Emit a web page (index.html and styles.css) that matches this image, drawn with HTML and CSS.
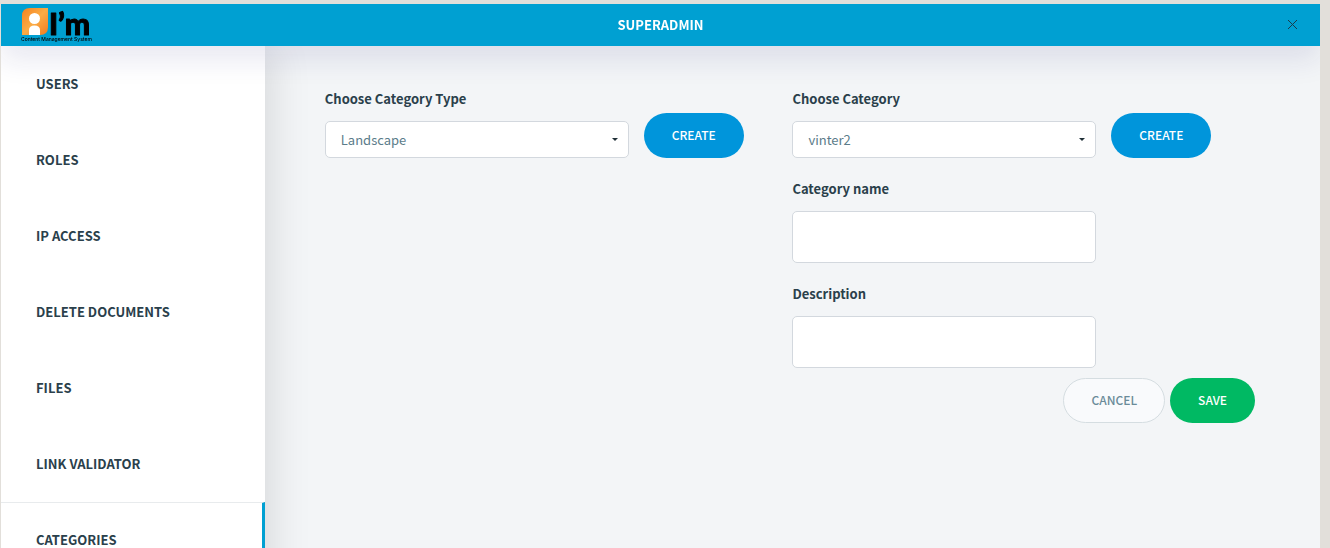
FILE: index.html
```html
<!DOCTYPE html>
<html lang="en">
<head>
<meta charset="utf-8">
<title>Superadmin</title>
<link rel="stylesheet" href="styles.css">
</head>
<body>
<div class="panel">
  <header class="header">
    <a class="logo" href="#" aria-label="I'm Content Management System">
      <svg width="80" height="40" viewBox="0 -2 80 40">
        <defs>
          <linearGradient id="badge" x1="0" y1="0" x2="1" y2="1">
            <stop offset="0" stop-color="#f58220"/>
            <stop offset="0.500" stop-color="#fbac45"/>
            <stop offset="1" stop-color="#f47b20"/>
          </linearGradient>
        </defs>
        <path d="M9 1H27V20Q27 28 19 28H1V9Q1 1 9 1Z" fill="url(#badge)"/>
        <circle cx="13.500" cy="11.500" r="5.500" fill="#fff"/>
        <path d="M8 28V23Q8 18.500 13.500 18.500Q19 18.500 19 23V28Z" fill="#fff"/>
        <text class="logo-name" x="28" y="28">I’m</text>
        <text class="logo-tagline" x="0" y="34">Content Management System</text>
      </svg>
    </a>
    <h1 class="title">SUPERADMIN</h1>
    <button class="close" type="button" aria-label="Close">
      <svg width="11" height="11" viewBox="0 0 11 11"><path d="M1 1L10 10M10 1L1 10" stroke="#1b3a49" stroke-width="1" shape-rendering="crispEdges"/></svg>
    </button>
  </header>
  <div class="body">
    <nav class="sidebar">
      <a class="tab" href="#">USERS</a>
      <a class="tab" href="#">ROLES</a>
      <a class="tab" href="#">IP ACCESS</a>
      <a class="tab" href="#">DELETE DOCUMENTS</a>
      <a class="tab" href="#">FILES</a>
      <a class="tab" href="#">LINK VALIDATOR</a>
      <a class="tab tab-active" href="#">CATEGORIES</a>
    </nav>
    <main class="content">
      <section class="column">
        <div class="row">
          <div class="field">
            <label class="label" for="type">Choose Category Type</label>
            <select class="control select" id="type"><option>Landscape</option></select>
          </div>
          <button class="button button-create" type="button">CREATE</button>
        </div>
      </section>
      <section class="column">
        <div class="row">
          <div class="field">
            <label class="label" for="category">Choose Category</label>
            <select class="control select" id="category"><option>vinter2</option></select>
          </div>
          <button class="button button-create" type="button">CREATE</button>
        </div>
        <div class="field">
          <label class="label" for="name">Category name</label>
          <input class="control input" id="name" type="text">
        </div>
        <div class="field">
          <label class="label" for="description">Description</label>
          <input class="control input" id="description" type="text">
        </div>
        <div class="actions">
          <button class="button button-cancel" type="button">CANCEL</button>
          <button class="button button-save" type="button">SAVE</button>
        </div>
      </section>
    </main>
  </div>
</div>
</body>
</html>
```
FILE: styles.css
```css
* {
  box-sizing: border-box;
}

body {
  margin: 0;
  padding: 4px 10px 0 1px;
  background: #e2dfda;
  color: #2a404b;
  font-family: "Noto Sans CJK SC", "Noto Sans", sans-serif;
  font-size: 13px;
  line-height: 20px;
}

button,
input,
select {
  font: inherit;
}

.panel {
  display: flex;
  flex-direction: column;
  height: calc(100vh - 4px);
  overflow-x: hidden;
  overflow-y: auto;
  scrollbar-width: none;
  background: #f3f5f7;
}

.header {
  position: sticky;
  top: 0;
  z-index: 2;
  display: grid;
  grid-template-columns: 1fr auto 1fr;
  align-items: center;
  flex: none;
  height: 42px;
  padding: 0 20px;
  background: #00a0d2;
  box-shadow: 0 14px 28px rgba(30, 30, 120, 0.1);
}

.logo {
  display: flex;
}

.logo-name {
  font-family: Lato, sans-serif;
  font-size: 30px;
  font-weight: 900;
  stroke: #000;
  stroke-width: 1;
  stroke-linejoin: round;
}

.logo-tagline {
  font-family: Inter, sans-serif;
  font-size: 5px;
  font-weight: 500;
}

.title {
  margin: 0;
  color: #fff;
  font-size: 13px;
  font-weight: 700;
}

.close {
  display: flex;
  justify-self: end;
  padding: 2px 2px 4px;
  border: 0;
  background: none;
}

.body {
  display: flex;
  flex: 1 0 auto;
}

.sidebar {
  flex: none;
  width: 20%;
  padding-bottom: 40px;
  background: #fff;
  box-shadow: 5px 0 40px rgba(0, 0, 0, 0.12);
}

.tab {
  display: flex;
  align-items: center;
  height: 76px;
  padding: 0 35px;
  color: inherit;
  font-weight: 700;
  text-decoration: none;
}

.tab-active {
  padding-bottom: 2px;
  border-top: 1px solid #e8ebed;
  border-right: 3px solid #00a0d2;
}

.content {
  display: grid;
  grid-template-columns: 1fr 1fr;
  flex: 1;
  align-items: start;
  padding: 43px 60px 0;
}

.column {
  display: flex;
  flex-direction: column;
  gap: 21px;
}

.row {
  display: flex;
  align-items: flex-end;
  gap: 15px;
}

.field {
  width: 65%;
}

.label {
  display: block;
  margin-bottom: 12px;
  font-weight: 700;
}

.control {
  display: block;
  width: 100%;
  padding: 0 15px;
  border: 1px solid #d3d8de;
  border-radius: 5px;
  background-color: #fff;
  color: #5b7c8a;
}

.select {
  height: 37px;
  appearance: none;
  background-image: url("data:image/svg+xml,%3Csvg xmlns='http://www.w3.org/2000/svg' width='6' height='3'%3E%3Cpath d='M0 0H6L3 3Z' fill='%23203038'/%3E%3C/svg%3E");
  background-position: right 10px center;
  background-repeat: no-repeat;
}

.input {
  height: 52px;
}

.button {
  height: 45px;
  padding: 0 27px 2px;
  border: 1px solid transparent;
  border-radius: 23px;
  color: #fff;
  font-size: 12px;
  font-weight: 500;
}

.button-create {
  background: #0095db;
}

.button-cancel {
  border-color: #d5dde1;
  background: #f9fafc;
  color: #6b8b99;
}

.button-save {
  background: #00b963;
}

.actions {
  display: flex;
  justify-content: flex-end;
  gap: 5px;
  margin-top: -11px;
  padding-right: 5px;
}
```
